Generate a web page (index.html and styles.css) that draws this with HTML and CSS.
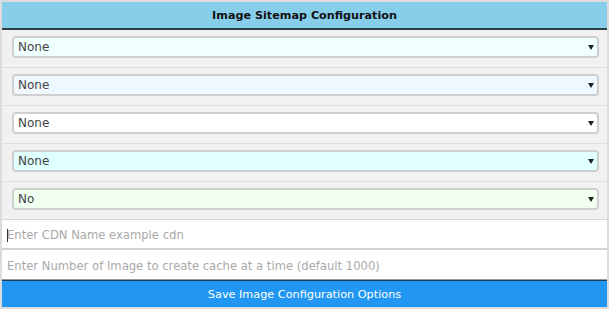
FILE: index.html
```html
<!DOCTYPE html>
<html>
<head>
<meta charset="utf-8">
<link rel="stylesheet" href="styles.css">
</head>
<body>
<div class="panel">
  <div class="header">Image Sitemap Configuration</div>
  <div class="row"><div class="sel"><select class="s1"><option>None</option></select></div></div>
  <div class="row"><div class="sel"><select class="s2"><option>None</option></select></div></div>
  <div class="row"><div class="sel"><select class="s3"><option>None</option></select></div></div>
  <div class="row"><div class="sel"><select class="s4"><option>None</option></select></div></div>
  <div class="row last"><div class="sel"><select class="s5"><option>No</option></select></div></div>
  <div class="focus-wrap"><input class="field" type="text" placeholder="Enter CDN Name example cdn"></div>
  <input class="field second" type="text" placeholder="Enter Number of Image to create cache at a time (default 1000)">
  <button class="save">Save Image Configuration Options</button>
</div>
</body>
</html>
```
FILE: styles.css
```css
html, body {
  margin: 0;
  padding: 0;
  background: #dcdcdc;
}
body {
  padding: 2px;
  width: 609px;
  height: 309px;
  box-sizing: border-box;
  font-family: "DejaVu Sans", Verdana, sans-serif;
}
.panel {
  display: flex;
  flex-direction: column;
  background: #f1f1f1;
}
.header {
  height: 26px;
  line-height: 27px;
  background: #87ceeb;
  border-bottom: 2px solid #2f3f48;
  text-align: center;
  font-weight: bold;
  font-size: 11.2px;
  color: #111;
}
.row {
  padding: 6px 8px 9px 10px;
  border-bottom: 1px solid #dedede;
}
.row.last {
  border-bottom: 1px solid #c9d9e1;
}
.sel {
  position: relative;
}
.sel::after {
  content: "";
  position: absolute;
  right: 5px;
  top: 9px;
  border-left: 3px solid transparent;
  border-right: 3px solid transparent;
  border-top: 5px solid #222;
  pointer-events: none;
}
select {
  appearance: none;
  -webkit-appearance: none;
  display: block;
  width: 100%;
  height: 22px;
  border: 2px solid #cfcfcf;
  border-radius: 4px;
  padding: 0 4px;
  font-family: "DejaVu Sans", Verdana, sans-serif;
  font-size: 12px;
  color: #444;
}
.s1 { background: #f0ffff; }
.s2 { background: #f0f8ff; }
.s3 { background: #ffffff; }
.s4 { background: #e0ffff; }
.s5 { background: #f0fff0; }
.focus-wrap {
  position: relative;
  display: flex;
  flex-direction: column;
}
.focus-wrap::before {
  content: "";
  position: absolute;
  left: 5px;
  top: 9px;
  width: 1px;
  height: 13px;
  background: #333;
}
.field {
  display: block;
  height: 30px;
  box-sizing: border-box;
  border: none;
  border-bottom: 2px solid #d2d2d2;
  background: #fff;
  padding: 2px 5px 0;
  font-family: "DejaVu Sans", Verdana, sans-serif;
  font-size: 11.6px;
  color: #333;
  outline: none;
}
.field::placeholder {
  color: #a9a9a9;
}
.field.second {
  border-bottom: 1px solid #9a9a9a;
}
.save {
  display: block;
  height: 27px;
  border: none;
  border-top: 1px solid #1d3c5c;
  background: #2196f3;
  color: #fff;
  font-family: "DejaVu Sans", Verdana, sans-serif;
  font-size: 11.25px;
  padding: 0;
}
```
